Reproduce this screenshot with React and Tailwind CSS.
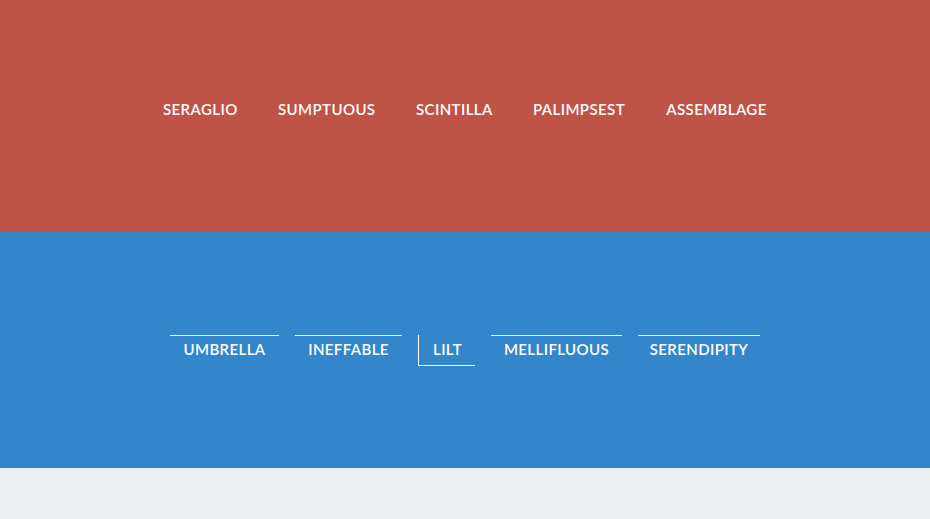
export default function App() {
  const top = [
    ["SERAGLIO", "w-[74px]"],
    ["SUMPTUOUS", "w-[97px]"],
    ["SCINTILLA", "w-[76px]"],
    ["PALIMPSEST", "w-[92px]"],
    ["ASSEMBLAGE", "w-[101px]"],
  ];
  const bottom = [
    ["UMBRELLA", "w-[109px]", false],
    ["INEFFABLE", "w-[107px]", false],
    ["LILT", "w-[57px]", true],
    ["MELLIFLUOUS", "w-[131px]", false],
    ["SERENDIPITY", "w-[122px]", false],
  ];
  return (
    <div className="w-[930px] h-[519px] flex flex-col font-['Lato',sans-serif] font-semibold text-white text-[15px]">
      <div className="h-[231px] bg-[#bf5347] flex items-center justify-center pb-[13px]">
        <div className="flex gap-[41px]">
          {top.map(([t, w]) => (
            <span key={t} className={`${w} text-center whitespace-nowrap tracking-[0.4px] leading-[18px] block`}>
              {t}
            </span>
          ))}
        </div>
      </div>
      <div className="h-[237px] bg-[#3386ca] flex items-center justify-center pt-[2px]">
        <div className="flex gap-[16px]">
          {bottom.map(([t, w, active]) => (
            <span
              key={t}
              className={
                active
                  ? `${w} h-[31px] border-l border-b border-white flex items-center justify-center whitespace-nowrap tracking-[0.4px] pb-[1px] pl-[1px]`
                  : `${w} h-[31px] border-t border-white flex items-center justify-center whitespace-nowrap tracking-[0.4px] pb-[4px]`
              }
            >
              {t}
            </span>
          ))}
        </div>
      </div>
      <div className="flex-1 bg-[#ebeff0]" />
    </div>
  );
}
